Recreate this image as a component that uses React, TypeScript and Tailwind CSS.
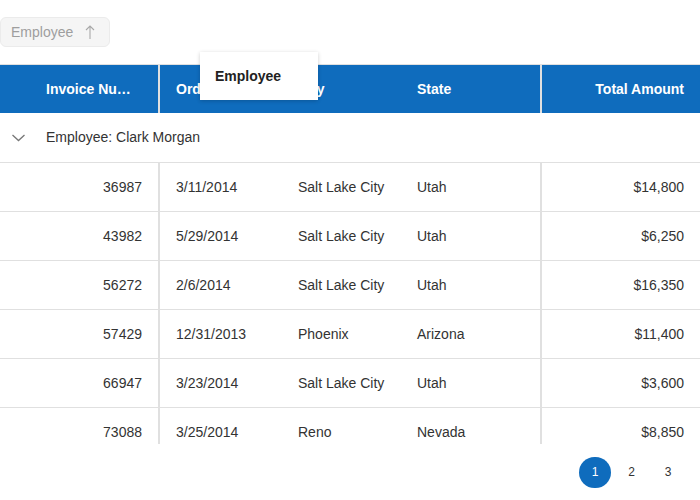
import React from "react";

const rows = [
  ["36987", "3/11/2014", "Salt Lake City", "Utah", "$14,800"],
  ["43982", "5/29/2014", "Salt Lake City", "Utah", "$6,250"],
  ["56272", "2/6/2014", "Salt Lake City", "Utah", "$16,350"],
  ["57429", "12/31/2013", "Phoenix", "Arizona", "$11,400"],
  ["66947", "3/23/2014", "Salt Lake City", "Utah", "$3,600"],
  ["73088", "3/25/2014", "Reno", "Nevada", "$8,850"],
];

export default function App() {
  return (
    <div
      className="relative w-[700px] h-[500px] bg-white text-[14px] text-[#333] overflow-hidden"
      style={{ fontFamily: '"Liberation Sans", Arial, sans-serif' }}
    >
      {/* group panel */}
      <div className="h-[64px] pt-[17px]">
        <div className="flex items-center w-[110px] h-[30px] rounded-[6px] border border-[#ebebeb] bg-[#f5f5f5] pl-[10px] text-[#9e9e9e]">
          <span>Employee</span>
          <svg className="ml-[11px]" width="12" height="16" viewBox="0 0 12 16" fill="none" stroke="#a8a8a8" strokeWidth="1.1">
            <path d="M6 15V2M2 6L6 2l4 4" />
          </svg>
        </div>
      </div>

      {/* header */}
      <div className="border-t border-[#e0e0e0] flex h-[49px] bg-[#0f6cbd] text-white font-bold">
        <div className="w-[160px] flex items-center pl-[46px] pr-[16px] border-r-2 border-[#e0e0e0] min-w-0">
          <span className="whitespace-nowrap" title="Invoice Number">Invoice Nu…</span>
        </div>
        <div className="w-[122px] flex items-center pl-[16px]">Order Date</div>
        <div className="w-[119px] flex items-center pl-[16px]">City</div>
        <div className="w-[141px] flex items-center pl-[16px] border-r-2 border-[#e0e0e0]">State</div>
        <div className="flex-1 flex items-center justify-end pr-[16px]">Total Amount</div>
      </div>

      {/* body */}
      <div className="h-[331px] overflow-hidden">
        <div className="flex items-center h-[50px] border-b border-[#e0e0e0]">
          <div className="w-[46px] flex items-center pl-[12px]">
            <svg width="13" height="8" viewBox="0 0 13 8" fill="none" stroke="#777" strokeWidth="1.3">
              <path d="M0.5 1l6 5.5 6-5.5" />
            </svg>
          </div>
          <span>Employee: Clark Morgan</span>
        </div>
        {rows.map((r) => (
          <div key={r[0]} className="flex h-[49px] border-b border-[#e0e0e0]">
            <div className="w-[160px] flex items-center justify-end pr-[16px] border-r-2 border-[#e0e0e0]">{r[0]}</div>
            <div className="w-[122px] flex items-center pl-[16px]">{r[1]}</div>
            <div className="w-[119px] flex items-center pl-[16px]">{r[2]}</div>
            <div className="w-[141px] flex items-center pl-[16px] border-r-2 border-[#e0e0e0]">{r[3]}</div>
            <div className="flex-1 flex items-center justify-end pr-[16px]">{r[4]}</div>
          </div>
        ))}
      </div>

      {/* pager */}
      <div className="flex justify-end items-center h-[56px] pr-[14px] text-[12px] text-[#333]">
        <div className="w-[32px] h-[31px] rounded-full bg-[#0f6cbd] text-white flex items-center justify-center">1</div>
        <div className="w-[37px] h-[31px] flex items-center justify-center ml-[2px]">2</div>
        <div className="w-[36px] h-[31px] flex items-center justify-center">3</div>
      </div>

      {/* drag dropdown */}
      <div className="absolute left-[200px] top-[52px] w-[118px] h-[48px] bg-white shadow-[0_1px_4px_rgba(0,0,0,0.2)] flex items-center pl-[15px] font-bold text-[#222]">
        Employee
      </div>
    </div>
  );
}
